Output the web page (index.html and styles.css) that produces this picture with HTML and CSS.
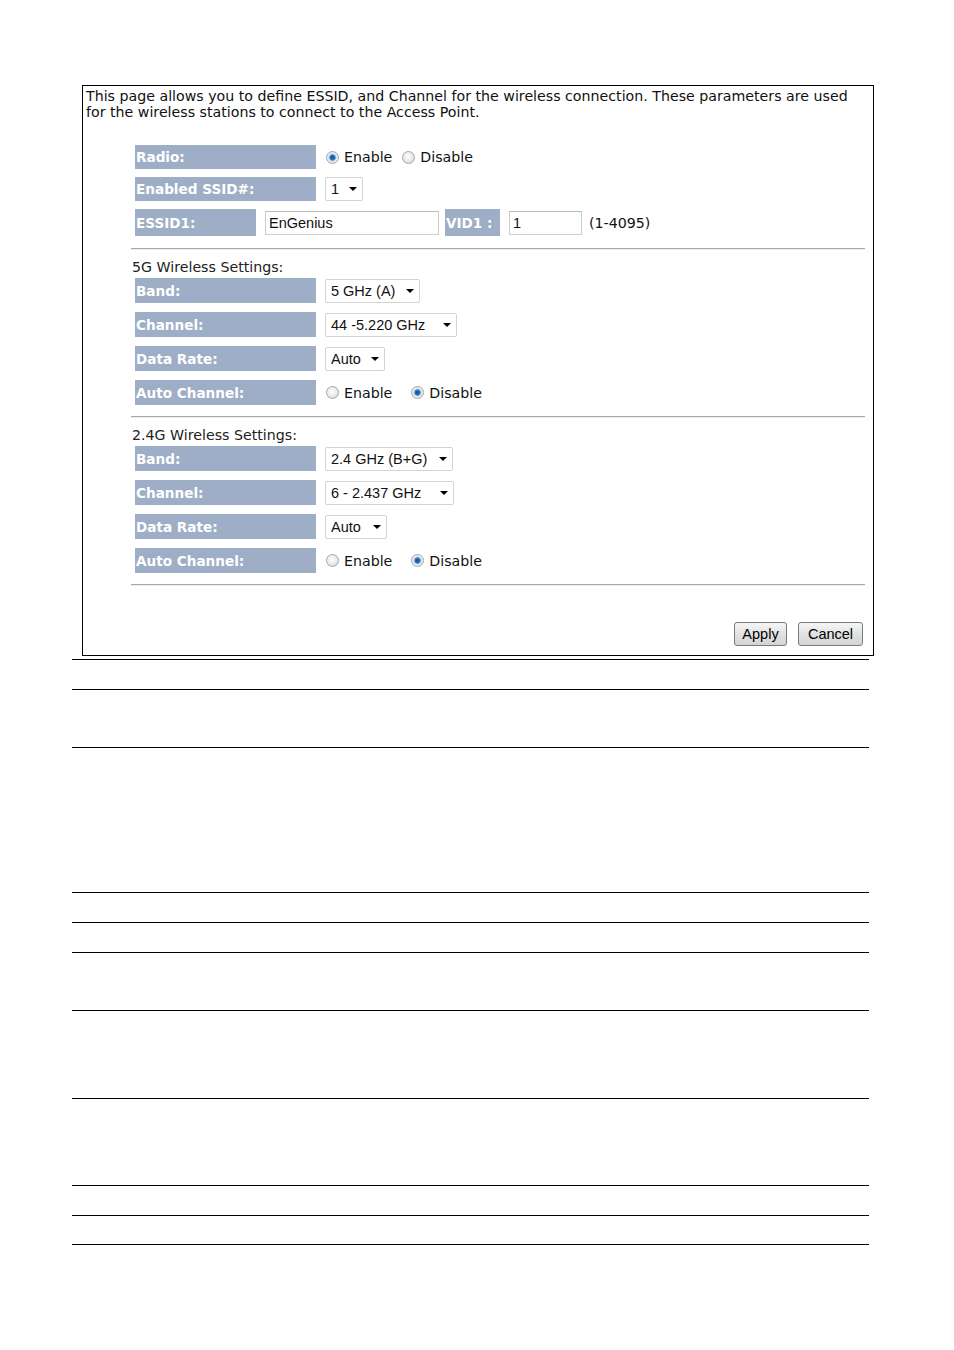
FILE: index.html
```html
<!DOCTYPE html>
<html lang="en">
<head>
    <meta charset="UTF-8">
    <meta name="viewport" content="width=device-width, initial-scale=1.0">
    <title>Wireless Basic Settings</title>
    <link rel="stylesheet" href="styles.css">
</head>
<body>
    <div class="page">
        <div class="panel">
            <p class="intro">This page allows you to define ESSID, and Channel for the wireless connection. These parameters are used<br>for the wireless stations to connect to the Access Point.</p>
            <div class="settings">
                <div class="row">
                    <div class="label">Radio:</div>
                    <div class="control">
                        <input type="radio" name="radio" checked><span class="opt">Enable</span>
                        <input type="radio" name="radio" class="near"><span class="opt">Disable</span>
                    </div>
                </div>
                <div class="row">
                    <div class="label">Enabled SSID#:</div>
                    <div class="control">
                        <span class="select w-ssid"><select><option>1</option></select></span>
                    </div>
                </div>
                <div class="row row-essid">
                    <div class="label label-essid">ESSID1:</div>
                    <input type="text" class="text essid" value="EnGenius">
                    <div class="label label-vid">VID1 :</div>
                    <input type="text" class="text vid" value="1">
                    <span class="hint">(1-4095)</span>
                </div>

                <hr>
                <div class="group-title">5G Wireless Settings:</div>
                <div class="row tall">
                    <div class="label">Band:</div>
                    <div class="control">
                        <span class="select w-band5"><select><option>5 GHz (A)</option></select></span>
                    </div>
                </div>
                <div class="row tall">
                    <div class="label">Channel:</div>
                    <div class="control">
                        <span class="select w-ch5"><select><option>44 -5.220 GHz</option></select></span>
                    </div>
                </div>
                <div class="row tall">
                    <div class="label">Data Rate:</div>
                    <div class="control">
                        <span class="select w-rate5"><select><option>Auto</option></select></span>
                    </div>
                </div>
                <div class="row tall last">
                    <div class="label">Auto Channel:</div>
                    <div class="control">
                        <input type="radio" name="auto5"><span class="opt">Enable</span>
                        <input type="radio" name="auto5" class="far" checked><span class="opt">Disable</span>
                    </div>
                </div>

                <hr>
                <div class="group-title">2.4G Wireless Settings:</div>
                <div class="row tall">
                    <div class="label">Band:</div>
                    <div class="control">
                        <span class="select w-band24"><select><option>2.4 GHz (B+G)</option></select></span>
                    </div>
                </div>
                <div class="row tall">
                    <div class="label">Channel:</div>
                    <div class="control">
                        <span class="select w-ch24"><select><option>6 - 2.437 GHz</option></select></span>
                    </div>
                </div>
                <div class="row tall">
                    <div class="label">Data Rate:</div>
                    <div class="control">
                        <span class="select w-rate24"><select><option>Auto</option></select></span>
                    </div>
                </div>
                <div class="row tall last">
                    <div class="label">Auto Channel:</div>
                    <div class="control">
                        <input type="radio" name="auto24"><span class="opt">Enable</span>
                        <input type="radio" name="auto24" class="far" checked><span class="opt">Disable</span>
                    </div>
                </div>
                <hr class="end">

                <div class="actions">
                    <button>Apply</button>
                    <button>Cancel</button>
                </div>
            </div>
        </div>

        <div class="doc-table">
            <div class="doc-row short"></div>
            <div class="doc-row mid"></div>
            <div class="doc-row tallest"></div>
            <div class="doc-row short"></div>
            <div class="doc-row short"></div>
            <div class="doc-row mid"></div>
            <div class="doc-row wide"></div>
            <div class="doc-row wide less"></div>
            <div class="doc-row short"></div>
            <div class="doc-row short closing"></div>
        </div>
    </div>
</body>
</html>
```

FILE: styles.css
```css
body {
    margin: 0;
    background: #fff;
    font-family: "DejaVu Sans", Verdana, sans-serif;
    color: #111;
}
.page {
    padding: 85px 0 0 72px;
}
.panel {
    margin-left: 10px;
    width: 790px;
    border: 1px solid #000;
    padding-bottom: 9px;
}
.intro {
    margin: 0;
    padding: 2px 0 0 3px;
    font-size: 14.2px;
    line-height: 16px;
}
.settings {
    margin: 25px 0 0 48px;
    width: 734px;
}
.row {
    display: flex;
    align-items: center;
    height: 24px;
    padding-left: 4px;
    margin-bottom: 8px;
}
.row.tall {
    height: 25px;
    margin-bottom: 9px;
}
.row.last {
    margin-bottom: 0;
}
.row-essid {
    height: 27px;
    margin-top: 2px;
    margin-bottom: 0;
}
.label {
    width: 181px;
    height: 100%;
    flex: none;
    background: #9daec6;
    color: #fff;
    font-weight: bold;
    font-size: 13.6px;
    display: flex;
    align-items: center;
    padding-left: 1px;
    box-sizing: border-box;
}
.label-essid {
    width: 121px;
}
.label-vid {
    width: 55px;
    margin-left: 6px;
}
.control {
    display: flex;
    align-items: center;
    margin-left: 9px;
    font-size: 14.2px;
}
.opt {
    margin-left: 5px;
}
input[type=radio] {
    appearance: none;
    width: 13px;
    height: 13px;
    margin: 0 0 0 1px;
    border-radius: 50%;
    border: 1px solid #a6a6a6;
    box-sizing: border-box;
    background: radial-gradient(circle at 45% 40%, #ffffff 0, #e6e6e6 60%, #cfcfcf 100%);
}
input[type=radio]:checked {
    background: radial-gradient(circle at 50% 50%, #0d4f95 0, #2a78c4 2.5px, #b9cde3 3.5px, #eef1f4 4.5px, #d3d3d3 100%);
}
input[type=radio].near {
    margin-left: 10px;
}
input[type=radio].far {
    margin-left: 19px;
}
.select {
    position: relative;
    display: inline-block;
    height: 24px;
}
.select select {
    appearance: none;
    width: 100%;
    height: 100%;
    margin: 0;
    padding: 0 0 0 5px;
    border: 1px solid #d3d3d3;
    border-radius: 2px;
    background: #fff;
    font-family: "Liberation Sans", Arial, sans-serif;
    font-size: 14.5px;
    color: #111;
}
.select::after {
    content: "";
    position: absolute;
    right: 6px;
    top: 10px;
    border-left: 4px solid transparent;
    border-right: 4px solid transparent;
    border-top: 4px solid #000;
}
.w-ssid { width: 38px; }
.w-band5 { width: 95px; }
.w-ch5 { width: 132px; }
.w-rate5 { width: 60px; }
.w-band24 { width: 128px; }
.w-ch24 { width: 129px; }
.w-rate24 { width: 62px; }
.text {
    height: 24px;
    box-sizing: border-box;
    border: 1px solid #cfcfcf;
    border-top-color: #b9b9b9;
    padding: 0 3px;
    font-family: "Liberation Sans", Arial, sans-serif;
    font-size: 14.5px;
    color: #111;
    margin: 0;
}
.essid {
    width: 174px;
    margin-left: 9px;
}
.vid {
    width: 73px;
    margin-left: 9px;
}
.hint {
    margin-left: 7px;
    font-size: 14.2px;
}
hr {
    height: 0;
    margin: 12px 0 0;
    border: 0;
    border-top: 1px solid #a8a8a8;
    border-bottom: 1px solid #ededed;
}
.row.last + hr {
    margin-top: 11px;
}
hr.end {
    margin-top: 9px;
}
.group-title {
    margin: 9px 0 3px 1px;
    font-size: 14.2px;
    line-height: 16px;
    color: #222;
}
.actions {
    display: flex;
    justify-content: flex-end;
    gap: 11px;
    margin-top: 36px;
    padding-right: 2px;
}
.actions button {
    height: 24px;
    padding: 0 6px;
    border: 1px solid #7a7a7a;
    border-radius: 3px;
    background: linear-gradient(#f6f6f6, #e2e2e2 50%, #d4d4d4);
    font-family: "Liberation Sans", Arial, sans-serif;
    font-size: 14.5px;
    color: #000;
}
.actions button:first-child {
    width: 53px;
}
.actions button:last-child {
    width: 65px;
}
.doc-table {
    margin-top: 3px;
    width: 797px;
}
.doc-row {
    box-sizing: border-box;
    border-top: 1px solid #000;
}
.doc-row.short { height: 30px; }
.doc-row.mid { height: 58px; }
.doc-row.tallest { height: 145px; }
.doc-row.wide { height: 88px; }
.doc-row.wide.less { height: 87px; }
.doc-row.closing {
    border-bottom: 1px solid #000;
}
```
